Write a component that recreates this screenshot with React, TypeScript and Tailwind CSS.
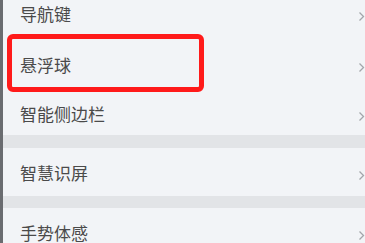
const rows = [
  { label: '导航键', h: 'h-[38px]', pad: 'pb-[11px]' },
  { label: '悬浮球', h: 'h-[52px]', pad: '' },
  { label: '智能侧边栏', h: 'h-[45px]', pad: 'pt-[1px]' },
]

function Chevron() {
  return (
    <svg width="7" height="11" viewBox="0 0 7 11" className="shrink-0">
      <path d="M1.5 1.5 L5.5 5.5 L1.5 9.5" fill="none" stroke="#a3a6ab" strokeWidth="1.3" />
    </svg>
  )
}

function Row({ label, h, pad }: { label: string; h: string; pad?: string }) {
  return (
    <div className={`flex shrink-0 ${h} items-center justify-between pl-[17px] pr-0 ${pad ?? ''}`}>
      <span className="text-[17px] leading-none text-[#4a4a4a]">{label}</span>
      <span className="translate-y-[3px]">
        <Chevron />
      </span>
    </div>
  )
}

export default function App() {
  return (
    <div
      className="relative h-[243px] w-[365px] overflow-hidden bg-[#f2f4f7]"
      style={{ fontFamily: '"Noto Sans CJK SC", "Noto Sans", sans-serif' }}
    >
      <div className="flex h-full">
        <div className="w-[3px] shrink-0 bg-[#6a6c70]" />
        <div className="flex flex-1 flex-col">
          {rows.map((r) => (
            <Row key={r.label} label={r.label} h={r.h} pad={r.pad} />
          ))}
          <div className="h-[13px] shrink-0 bg-[#e2e4e7]" />
          <Row label="智慧识屏" h="h-[48px]" />
          <div className="h-[12px] shrink-0 bg-[#e2e4e7]" />
          <Row label="手势体感" h="h-[48px]" />
        </div>
      </div>
      {/* red highlight round the floating ball entry */}
      <div className="absolute left-[7px] top-[34px] h-[58px] w-[197px] rounded-[6px] border-[5px] border-[#ff1a1a]" />
    </div>
  )
}
